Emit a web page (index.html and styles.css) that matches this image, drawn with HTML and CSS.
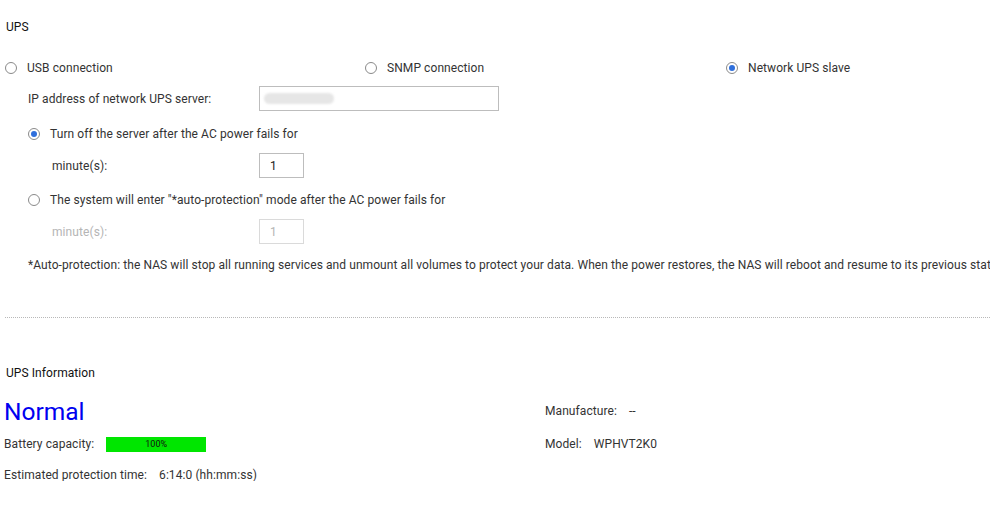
FILE: index.html
```html
<!DOCTYPE html>
<html lang="en">
<head>
    <meta charset="UTF-8">
    <meta name="viewport" content="width=device-width, initial-scale=1.0">
    <title>UPS</title>
    <link rel="stylesheet" href="styles.css">
</head>
<body>

<!-- UPS settings -->
<div class="section-title first">UPS</div>

<div class="mode-row">
    <div class="mode"><span class="radio"></span>USB connection</div>
    <div class="mode"><span class="radio"></span>SNMP connection</div>
    <div class="mode"><span class="radio checked"></span>Network UPS slave</div>
</div>

<div class="field ip-row">
    <span class="field-label">IP address of network UPS server:</span>
    <span class="text-input wide"><span class="masked"></span></span>
</div>

<div class="option option-first"><span class="radio checked"></span>Turn off the server after the AC power fails for</div>
<div class="field sub">
    <span class="field-label">minute(s):</span>
    <span class="text-input small">1</span>
</div>

<div class="option"><span class="radio"></span>The system will enter "*auto-protection" mode after the AC power fails for</div>
<div class="field sub disabled">
    <span class="field-label">minute(s):</span>
    <span class="text-input small">1</span>
</div>

<div class="note">*Auto-protection: the NAS will stop all running services and unmount all volumes to protect your data. When the power restores, the NAS will reboot and resume to its previous status.</div>

<hr class="divider">

<!-- UPS information -->
<div class="section-title">UPS Information</div>

<div class="info">
    <div class="status">Normal</div>
    <div class="info-item"><span class="info-label">Manufacture:</span>--</div>

    <div class="info-item">
        <span class="info-label">Battery capacity:</span>
        <span class="battery"><span class="battery-fill" style="width: 100%">100%</span></span>
    </div>
    <div class="info-item"><span class="info-label">Model:</span>WPHVT2K0</div>

    <div class="info-item"><span class="info-label">Estimated protection time:</span>6:14:0 (hh:mm:ss)</div>
</div>

</body>
</html>
```

FILE: styles.css
```css
body {
    font-family: Roboto, "Liberation Sans", Arial, sans-serif;
    font-size: 12px;
    letter-spacing: 0.08px;
    color: #333;
    margin: 0;
    background: #fff;
    overflow: hidden;
    width: 990px;
}
.section-title {
    height: 20px;
    line-height: 20px;
    padding-left: 6px;
    color: #111;
}
.section-title.first {
    margin-top: 17px;
}
.mode-row {
    display: grid;
    grid-template-columns: 360px 361px 1fr;
    margin-top: 21px;
    padding-left: 5px;
}
.mode {
    display: flex;
    align-items: center;
    height: 20px;
}
.radio {
    display: inline-block;
    box-sizing: border-box;
    width: 12px;
    height: 12px;
    border: 1px solid #8a8a8a;
    border-radius: 50%;
    margin-right: 10px;
    position: relative;
    background: #fff;
}
.radio.checked::after {
    content: "";
    position: absolute;
    left: 2px;
    top: 2px;
    width: 6px;
    height: 6px;
    border-radius: 50%;
    background: #2f6fdc;
}
.field {
    display: flex;
    align-items: center;
    height: 25px;
}
.field-label {
    box-sizing: border-box;
}
.ip-row {
    margin-top: 8px;
    padding-left: 28px;
}
.ip-row .field-label {
    width: 231px;
}
.sub {
    margin-top: 9px;
    padding-left: 52px;
}
.sub .field-label {
    width: 207px;
}
.text-input {
    box-sizing: border-box;
    height: 25px;
    border: 1px solid #bdbdbd;
    background: #fff;
    display: flex;
    align-items: center;
    color: #222;
}
.text-input.wide {
    width: 240px;
    padding-left: 4px;
}
.text-input.small {
    width: 45px;
    padding-left: 10px;
}
.masked {
    width: 70px;
    height: 11px;
    background: #e6e6e6;
    border-radius: 6px;
    filter: blur(1px);
}
.disabled .field-label,
.disabled .text-input {
    color: #b5b5b5;
}
.disabled .text-input {
    border-color: #dadada;
}
.option {
    display: flex;
    align-items: center;
    height: 20px;
    padding-left: 28px;
    margin-top: 12px;
}
.option-first {
    margin-top: 13px;
}
.note {
    margin-top: 11px;
    padding-left: 28px;
    height: 20px;
    line-height: 20px;
    white-space: nowrap;
}
.divider {
    border: none;
    border-top: 1px dotted #b8b8b8;
    margin: 42px 0 0 5px;
    height: 0;
}
.divider + .section-title {
    margin-top: 45px;
}
.info {
    display: grid;
    grid-template-columns: 545px 1fr;
    grid-template-rows: 30px 16px 20px;
    row-gap: 9px;
    margin-top: 14px;
}
.status {
    font-size: 24.5px;
    letter-spacing: 0;
    color: #0000f0;
    line-height: 30px;
    padding-left: 4px;
}
.info-item {
    display: flex;
    align-items: center;
    padding-left: 4px;
}
.info > .info-item:nth-child(2) {
    padding-left: 0;
    align-self: center;
    margin-top: -3px;
}
.info > .info-item:nth-child(4) {
    padding-left: 0;
}
.info-label {
    margin-right: 12px;
}
.battery {
    display: inline-block;
    width: 100px;
    height: 15px;
    background: #e0e0e0;
}
.battery-fill {
    display: block;
    height: 15px;
    line-height: 15px;
    background: #00e600;
    color: #111;
    font-size: 9px;
    text-align: center;
}
.info > .info-item:nth-child(5) {
    margin-top: 7px;
}
```
